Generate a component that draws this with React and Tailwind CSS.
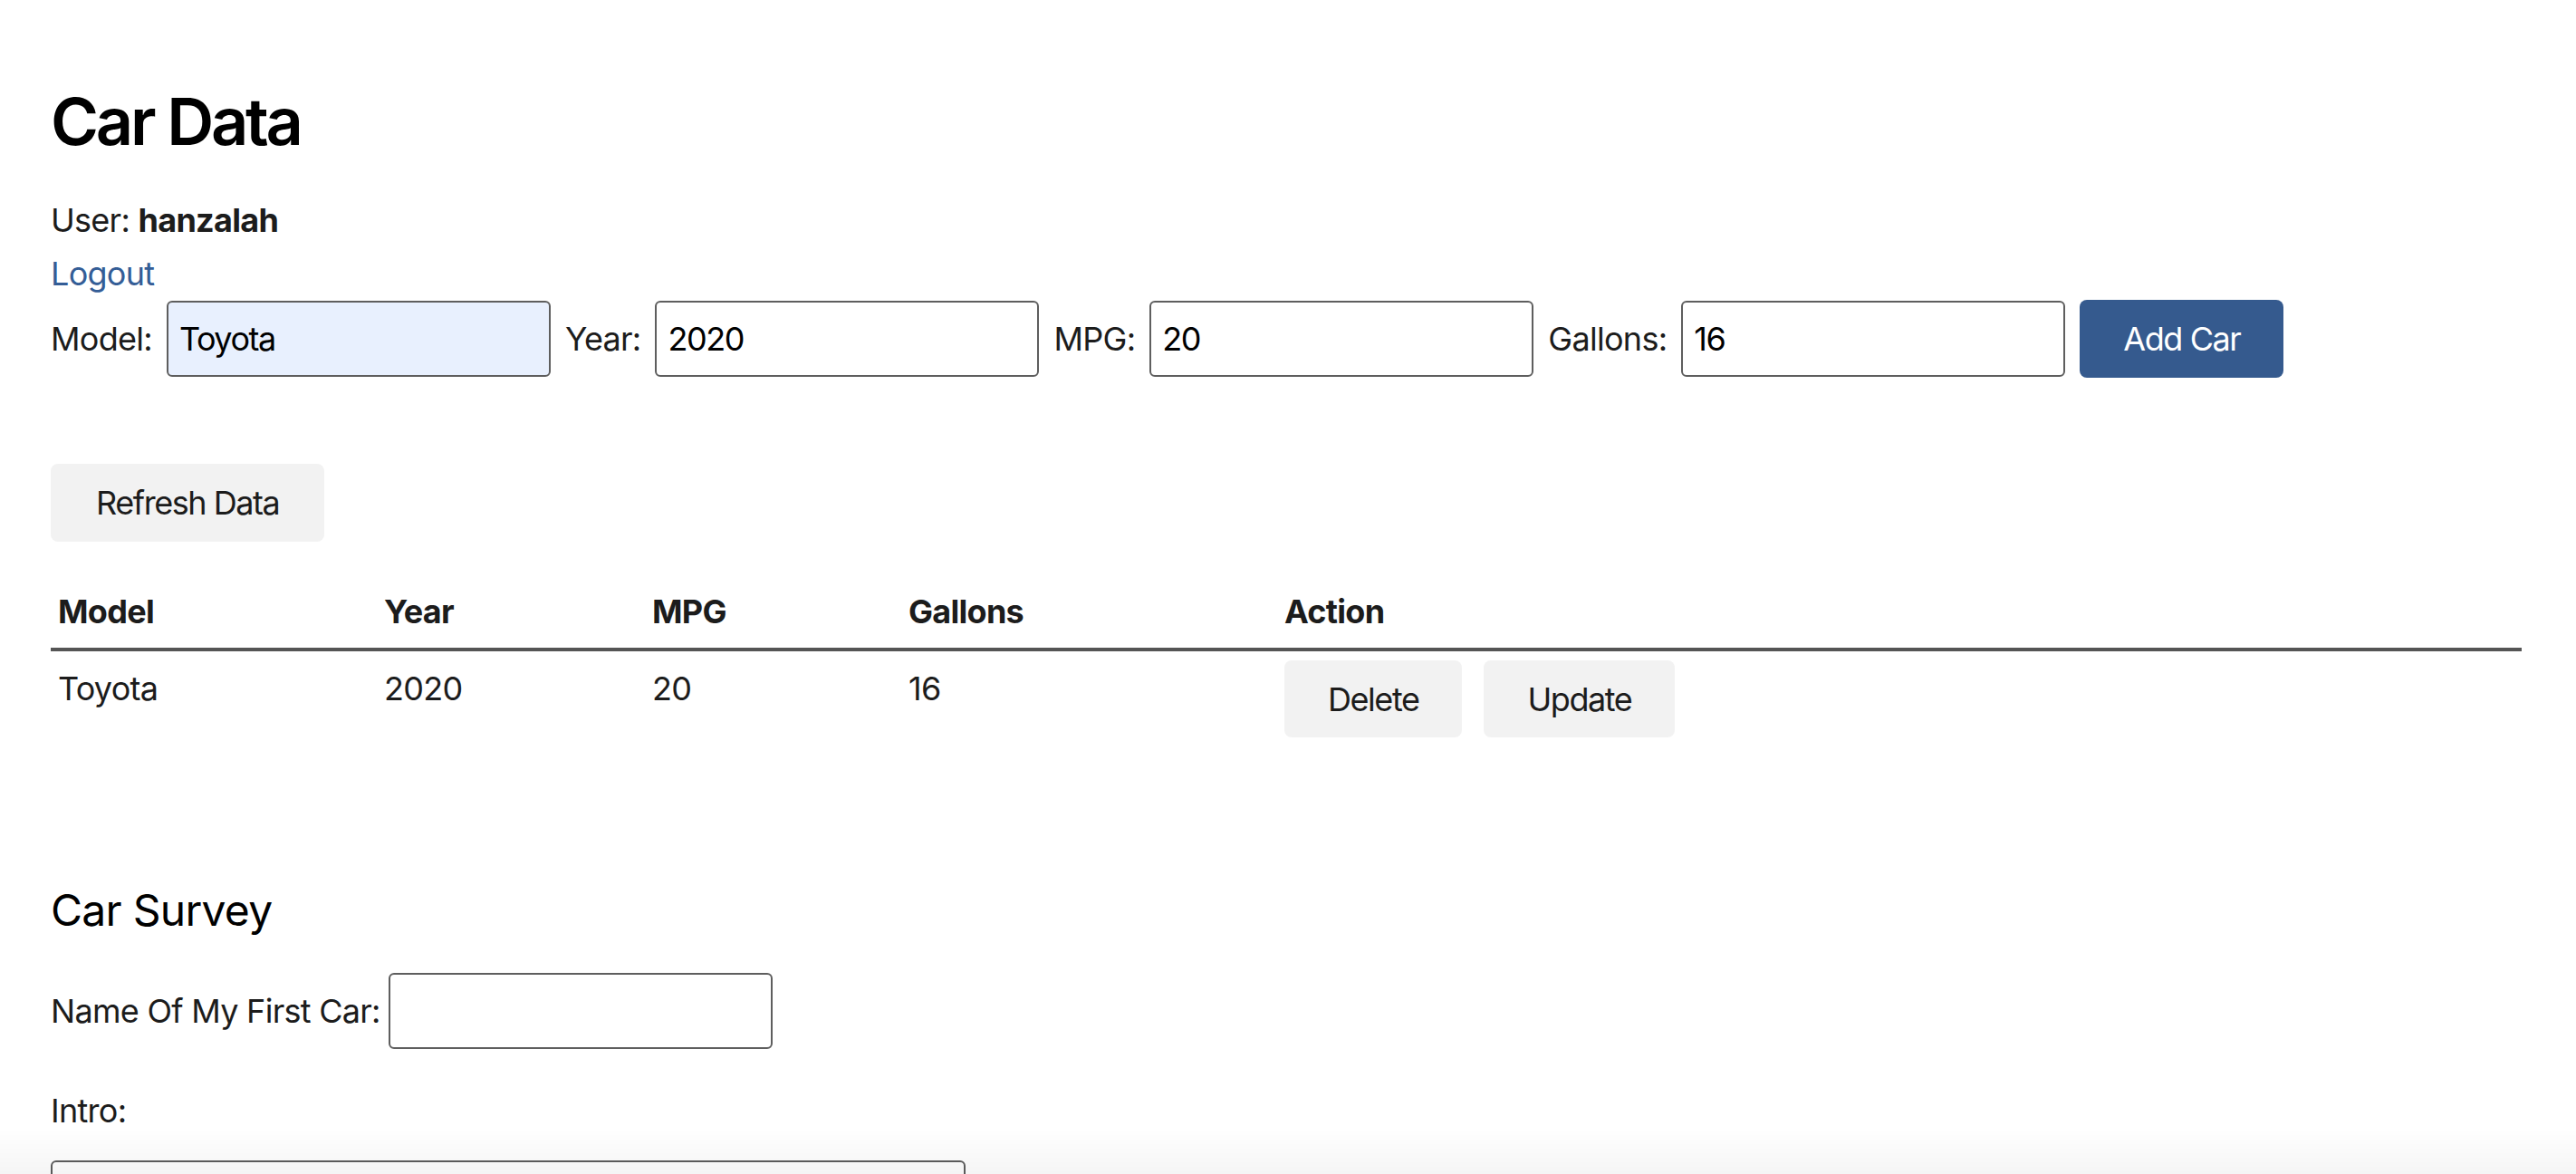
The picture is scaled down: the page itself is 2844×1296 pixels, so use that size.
import { useState } from 'react';

const COLUMNS = [
  { key: 'model', label: 'Model', width: 'w-[360px]' },
  { key: 'year', label: 'Year', width: 'w-[296px]' },
  { key: 'mpg', label: 'MPG', width: 'w-[283px]' },
  { key: 'gallons', label: 'Gallons', width: 'w-[415px]' },
];

const inputClass =
  'h-[84px] w-[424px] rounded-[6px] border-2 border-[#5e5e5e] px-[12px] text-[36px] tracking-[-0.04em] text-black outline-none';

function Field({ label, value, onChange, highlight }) {
  return (
    <>
      <label className="text-[36px] leading-[44px] text-[#1c1c1c]">{label}</label>
      <input
        className={`${inputClass} ${highlight ? 'bg-[#e8f0fe]' : 'bg-white'}`}
        value={value}
        onChange={(e) => onChange(e.target.value)}
      />
    </>
  );
}

export default function App() {
  const [form, setForm] = useState({ model: 'Toyota', year: '2020', mpg: '20', gallons: '16' });
  const [cars] = useState([{ id: 1, model: 'Toyota', year: 2020, mpg: 20, gallons: 16 }]);
  const [firstCar, setFirstCar] = useState('');

  const set = (key) => (value) => setForm({ ...form, [key]: value });

  return (
    <div className="min-h-screen bg-white pl-[56px] pr-[60px] pt-[90px] font-['Inter','Noto_Sans',sans-serif] tracking-[-0.045em] text-[#1c1c1c]">
      <h1 className="text-[72px] font-semibold leading-[88px] tracking-[-0.045em] text-black">Car Data</h1>
      <p className="mt-[43px] text-[36px] leading-[44px]">
        User: <strong className="font-bold">hanzalah</strong>
      </p>
      <a href="#" className="mt-[15px] block w-fit text-[36px] leading-[44px] text-[#345d96]">
        Logout
      </a>

      {/* Add car form */}
      <form className="mt-[7px] flex h-[86px] items-center gap-[16px]" onSubmit={(e) => e.preventDefault()}>
        <Field label="Model:" value={form.model} onChange={set('model')} highlight />
        <Field label="Year:" value={form.year} onChange={set('year')} />
        <Field label="MPG:" value={form.mpg} onChange={set('mpg')} />
        <Field label="Gallons:" value={form.gallons} onChange={set('gallons')} />
        <button className="h-[86px] rounded-[8px] bg-[#355a8e] px-[48px] text-[36px] tracking-[-0.04em] text-white">
          Add Car
        </button>
      </form>

      <button className="mt-[95px] h-[86px] rounded-[8px] bg-[#f2f2f2] px-[50px] text-[36px] tracking-[-0.04em] text-[#1c1c1c]">
        Refresh Data
      </button>

      {/* Cars table */}
      <table className="mt-[43px] w-full table-fixed border-separate border-spacing-0">
        <thead>
          <tr>
            {COLUMNS.map((col) => (
              <th
                key={col.key}
                className={`${col.width} border-b-4 border-[#555555] pb-[18px] pl-[8px] pt-[12px] text-left text-[36px] font-bold leading-[44px]`}
              >
                {col.label}
              </th>
            ))}
            <th className="border-b-4 border-[#555555] pb-[18px] pl-[8px] pt-[12px] text-left text-[36px] font-bold leading-[44px]">
              Action
            </th>
          </tr>
        </thead>
        <tbody>
          {cars.map((car) => (
            <tr key={car.id}>
              {COLUMNS.map((col) => (
                <td key={col.key} className="pl-[8px] pt-[19px] align-top text-[36px] leading-[44px]">
                  {car[col.key]}
                </td>
              ))}
              <td className="pl-[8px] pt-[10px] align-top">
                <div className="flex gap-[24px]">
                  <button className="h-[85px] rounded-[8px] bg-[#f2f2f2] px-[48px] text-[36px] tracking-[-0.04em] text-[#1c1c1c]">
                    Delete
                  </button>
                  <button className="h-[85px] rounded-[8px] bg-[#f2f2f2] px-[48px] text-[36px] tracking-[-0.04em] text-[#1c1c1c]">
                    Update
                  </button>
                </div>
              </td>
            </tr>
          ))}
        </tbody>
      </table>

      {/* Survey */}
      <h2 className="mt-[162px] text-[48px] font-normal leading-[58px] text-black">Car Survey</h2>
      <div className="mt-[40px] flex items-center gap-[9px]">
        <label className="text-[36px] leading-[44px]">Name Of My First Car:</label>
        <input
          className={`${inputClass} bg-white`}
          value={firstCar}
          onChange={(e) => setFirstCar(e.target.value)}
        />
      </div>
      <p className="mt-[46px] text-[36px] leading-[44px]">Intro:</p>
      <textarea className="mt-[33px] block h-[200px] w-[1010px] rounded-[6px] border-2 border-[#5e5e5e] bg-white" />

      <div className="pointer-events-none fixed bottom-0 left-0 right-0 h-[50px] bg-linear-to-b from-transparent to-black/[0.04]" />
    </div>
  );
}
